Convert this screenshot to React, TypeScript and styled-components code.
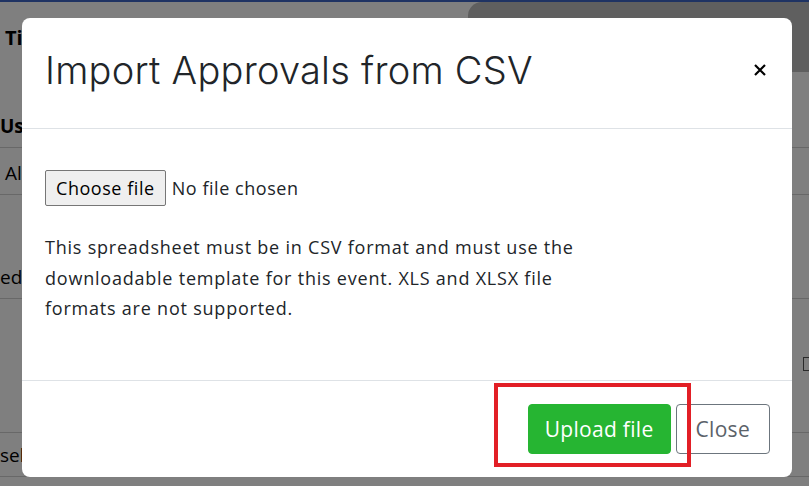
import styled, { createGlobalStyle } from "styled-components";

const GlobalStyle = createGlobalStyle`
  html, body {
    margin: 0;
    padding: 0;
    background: #ffffff;
    font-family: "Open Sans", "Liberation Sans", sans-serif;
    color: #212529;
    overflow: hidden;
  }
`;

const Page = styled.div`
  position: relative;
  width: 809px;
  height: 486px;
  border-top: 2px solid #1f3363;
  box-sizing: border-box;
  background: #ffffff;
  overflow: hidden;
`;

const TopBar = styled.div`
  display: flex;
  height: 70px;
`;

const TopTitle = styled.div`
  flex: 0 0 468px;
  padding: 22px 0 0 5px;
  box-sizing: border-box;
  font-size: 20px;
  font-weight: 700;
  color: #000;
`;

const TopPanel = styled.div`
  flex: 1;
  background: #bebebe;
  border-top-left-radius: 14px;
`;

const Rows = styled.div`
  display: grid;
  grid-template-columns: 1fr;
`;

const Row = styled.div<{ $h: number; $line?: boolean; $bold?: boolean }>`
  height: ${(p) => p.$h}px;
  box-sizing: border-box;
  display: flex;
  align-items: flex-end;
  justify-content: space-between;
  padding: 0 0 8px 0;
  border-bottom: ${(p) => (p.$line ? "1px solid #d0d0d0" : "none")};
  font-size: 19px;
  font-weight: ${(p) => (p.$bold ? 700 : 400)};
  color: #000;
`;

const Box = styled.span`
  display: inline-block;
  width: 12px;
  height: 12px;
  border: 1px solid #555;
  margin-right: -8px;
  margin-bottom: 4px;
`;

const Backdrop = styled.div`
  position: absolute;
  inset: 0;
  background: rgba(0, 0, 0, 0.5);
`;

const Modal = styled.div`
  position: absolute;
  left: 22px;
  top: 16px;
  width: 770px;
  height: 459px;
  background: #fff;
  border-radius: 8px;
  display: flex;
  flex-direction: column;
`;

const Header = styled.div`
  height: 111px;
  flex: 0 0 111px;
  box-sizing: border-box;
  border-bottom: 1px solid #dee2e6;
  display: flex;
  align-items: center;
  justify-content: space-between;
  padding: 0 22px 6px 23px;
`;

const Title = styled.h1`
  margin: 0;
  font-family: "Inter", "Liberation Sans", sans-serif;
  font-weight: 300;
  font-size: 38px;
  color: #212529;
  letter-spacing: 0.25px;
`;

const CloseX = styled.button`
  border: none;
  background: none;
  padding: 0;
  width: 20px;
  height: 20px;
  display: flex;
  align-items: center;
  justify-content: center;
  cursor: pointer;
`;

const Body = styled.div`
  flex: 1;
  padding: 41px 23px 0;
  border-bottom: 1px solid #dee2e6;
`;

const FileRow = styled.div`
  display: flex;
  align-items: center;
  gap: 6px;
  font-family: "Open Sans", "Liberation Sans", sans-serif;
  font-size: 18px;
  letter-spacing: 0.55px;
  color: #212529;
`;

const ChooseButton = styled.button`
  height: 36px;
  padding: 0 10px;
  background: #efefef;
  border: 1px solid #767676;
  border-radius: 2px;
  font-family: inherit;
  font-size: 18px;
  letter-spacing: 0.55px;
  color: #000;
`;

const Note = styled.p`
  margin: 26px 0 0;
  width: 560px;
  font-family: "Open Sans", "Liberation Sans", sans-serif;
  font-size: 18px;
  letter-spacing: 0.78px;
  line-height: 30.5px;
  color: #212529;
`;

const Footer = styled.div`
  height: 96px;
  display: flex;
  align-items: center;
  justify-content: flex-end;
  gap: 5px;
  padding: 0 22px;
`;

const Highlight = styled.div`
  position: absolute;
  left: 472px;
  top: 365px;
  width: 189px;
  height: 76px;
  border: 4px solid #e21f26;
`;

const Btn = styled.button<{ $primary?: boolean }>`
  height: 50px;
  padding: 0 ${(p) => (p.$primary ? 16 : 19)}px;
  border-radius: 4px;
  font-family: "Open Sans", "Liberation Sans", sans-serif;
  font-size: 21px;
  letter-spacing: 0.3px;
  cursor: pointer;
  background: ${(p) => (p.$primary ? "#26b532" : "#fff")};
  color: ${(p) => (p.$primary ? "#fff" : "#5b6269")};
  border: 1px solid ${(p) => (p.$primary ? "#26b532" : "#6c757d")};
`;

export default function App() {
  return (
    <>
      <GlobalStyle />
      <Page>
        <TopBar>
          <TopTitle>Ti</TopTitle>
          <TopPanel />
        </TopBar>
        <Rows>
          <Row $h={76} $line $bold>
            <span>Use</span>
          </Row>
          <Row $h={47} $line>
            <span>&nbsp;Al</span>
          </Row>
          <Row $h={104} $line>
            <span>ed</span>
          </Row>
          <Row $h={38}>
            <span />
          </Row>
          <Row $h={46}>
            <span />
            <Box />
          </Row>
          <Row $h={50} $line>
            <span />
          </Row>
          <Row $h={44} $line>
            <span>sel</span>
          </Row>
        </Rows>
        <Backdrop />
        <Modal>
          <Header>
            <Title>Import Approvals from CSV</Title>
            <CloseX aria-label="Close">
              <svg width="14" height="14" viewBox="0 0 14 14">
                <path d="M2 2 L12 12 M12 2 L2 12" stroke="#000" strokeWidth="2.2" />
              </svg>
            </CloseX>
          </Header>
          <Body>
            <FileRow>
              <ChooseButton>Choose file</ChooseButton>
              <span>No file chosen</span>
            </FileRow>
            <Note>
              This spreadsheet must be in CSV format and must use the
              downloadable template for this event. XLS and XLSX file formats
              are not supported.
            </Note>
          </Body>
          <Footer>
            <Btn $primary>Upload file</Btn>
            <Btn>Close</Btn>
          </Footer>
          <Highlight />
        </Modal>
      </Page>
    </>
  );
}
